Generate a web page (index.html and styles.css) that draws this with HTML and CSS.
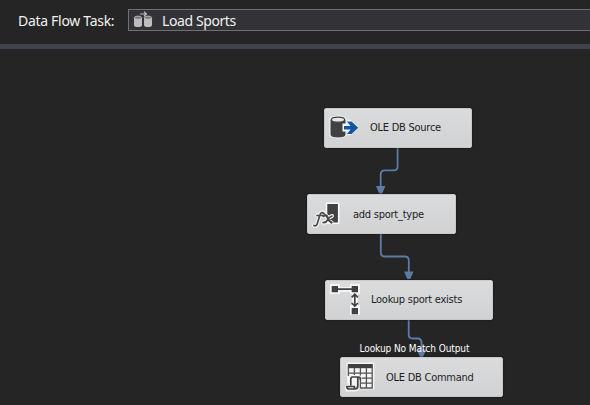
FILE: index.html
```
<!DOCTYPE html>
<html lang="en">
<head>
<meta charset="utf-8">
<title>Data Flow Task</title>
<link rel="stylesheet" href="styles.css">
</head>
<body>
<header class="toolbar">
  <span class="toolbar-label">Data Flow Task:</span>
  <div class="task-picker">
    <svg class="task-icon" width="20" height="17" viewBox="0 0 20 17">
      <g fill="#bdbdbd"><path d="M1 7v7q0 2 4 2t4-2V7zM11 7v7q0 2 4 2t4-2V7z"/></g>
      <g fill="#77777a" stroke="#c8c8c8" stroke-width=".8"><ellipse cx="5" cy="6.7" rx="3.7" ry="1.6"/><ellipse cx="15" cy="6.7" rx="3.7" ry="1.6"/></g>
      <path d="M7 3H13M11 .8 13.400 3 11 5.200" fill="none" stroke="#c0c0c0" stroke-width="1.200"/>
    </svg>
    <span class="task-name">Load Sports</span>
  </div>
</header>
<main class="canvas">
  <svg class="links" width="590" height="356" viewBox="0 49 590 356">
    <g fill="none" stroke="#5d7ba6" stroke-width="1.8">
      <path d="M397.6 148V166.500Q397.600 170.300 393.800 170.300H385Q380.700 170.300 380.700 174.500V188"/>
      <path d="M380.800 234V252.500Q380.800 256.500 384.800 256.500H404.800Q408.800 256.500 408.800 260.500V273"/>
      <path d="M408.700 319.500V334.500Q408.700 338.500 412.700 338.500H417.500Q421.500 338.500 421.500 342.500V352"/>
    </g>
    <path fill="#5d7ba6" d="M376 186h9.400l-3.200 7.500h-3zM404.100 271.500h9.400l-3.200 7.500h-3zM416.800 349.500h9.400l-3.200 7.500h-3z"/>
  </svg>

  <div class="node source">
    <svg class="node-icon" width="36" height="32" viewBox="0 0 36 32">
      <g fill="#f8f8f8" stroke="#f8f8f8" stroke-width="3" stroke-linejoin="round"><path d="M6 7q7-4 14 0v16q-7 4-14 0zM19 14h5V9l8 6.500-8 6.500v-5h-5z"/></g>
      <path fill="#414141" d="M5.500 7.500v15q0 3 7.500 3t7.500-3v-15z"/>
      <ellipse cx="13" cy="7.700" rx="6.600" ry="2.500" fill="#e8e8e8" stroke="#414141" stroke-width="1.200"/>
      <path d="M17.500 11.500h5v8h-5z" fill="#f8f8f8"/>
      <path fill="#0f56a5" d="M19 14h6.500l-3.500-4.500h4.500l6.800 6.200-6.800 6.200H22l3.500-4.500H19z"/>
    </svg>
    <span class="node-label">OLE DB Source</span>
  </div>

  <div class="node derived">
    <svg class="node-icon" width="36" height="32" viewBox="0 0 36 32">
      <path fill="#414141" stroke="#f8f8f8" stroke-width="1.600" d="M18.500 5.300h12.200v20H18.500z"/>
      <g fill="none" stroke-linecap="round" transform="translate(-1.500 -1)">
        <g stroke="#f5f5f5" stroke-width="4"><path d="M17.500 16.500q-3-2.500-4.300 2L11 26q-1 3.800-3.600 2.500M10.500 18.500h6M17 19q3-2 4 1.500t4 5M25.500 19q-3 1-4.500 4t-4.500 2.500"/></g>
        <g stroke="#4a4a4a" stroke-width="1.700"><path d="M17.500 16.500q-3-2.500-4.300 2L11 26q-1 3.800-3.600 2.500M10.500 18.500h6"/><path stroke-width="2.300" d="M17 19q3-2 4 1.500t4 5"/><path d="M25.500 19q-3 1-4.500 4t-4.500 2.500"/></g>
      </g>
    </svg>
    <span class="node-label">add sport_type</span>
  </div>

  <div class="node lookup">
    <svg class="node-icon" width="36" height="38" viewBox="0 0 36 38">
      <g transform="translate(-1 -1)">
        <path fill="#f5f5f5" d="M5 4h10v3h10V4h10v10h-2v11h2v10H25V25h2V14h-2v-2H15v2H5z"/>
        <g fill="#414141"><path d="M6.700 6h6.300v6.300H6.700zM26.700 6h6.300v6.300h-6.300zM26.700 28h6.300v6.300h-6.300zM12 8.300h15v1.700H12z"/></g>
        <path fill="none" stroke="#414141" stroke-width="1.700" d="M29.800 14v12M26.700 17.300l3.100-3 3.100 3M26.700 23l3.100 3 3.100-3"/>
      </g>
    </svg>
    <span class="node-label">Lookup sport exists</span>
  </div>

  <div class="node command">
    <svg class="node-icon" width="36" height="34" viewBox="0 0 36 34">
      <g transform="translate(-1.200 -1)">
        <path fill="#f5f5f5" d="M6.500 3.500h28v27H20l-4 2H5.500v-6l2-1z"/>
        <path fill="#414141" d="M8 5h25v4.200H8z"/>
        <path fill="none" stroke="#555" stroke-width="1.300" d="M8.600 8v9M32.400 8v21H20M8.600 14.200h23.800M18 19.200h14.400M20 24.200h12.400M14.600 9v7M20.600 9v20M26.600 9v20"/>
        <path fill="#f5f5f5" d="M9 16.500h13v4h-3v11H6v-5h5v-6H9z"/>
        <path fill="none" stroke="#414141" stroke-width="1.700" d="M20.500 21v-1.500q0-1.500-2-1.500h-6q-1.500 0-1.500 2.500v6M18 18.500v8.500q0 3-3 3H9.500q-2.500 0-2.500-2.500h7.500q0 2.500 1.500 2.500"/>
      </g>
    </svg>
    <span class="node-label">OLE DB Command</span>
  </div>

  <span class="link-label">Lookup No Match Output</span>
</main>
</body>
</html>
```
FILE: styles.css
```
* { box-sizing: border-box; }

body {
  margin: 0;
  width: 590px;
  height: 405px;
  overflow: hidden;
  background: #252525;
  font-family: "Noto Sans", sans-serif;
  color: #f1f1f1;
}

.toolbar {
  display: flex;
  align-items: flex-start;
  height: 49px;
  padding: 9px 0 0 18px;
  border-bottom: 5px solid #3f4248;
  white-space: nowrap;
}

.toolbar-label {
  width: 110px;
  font-size: 14px;
  line-height: 23px;
  letter-spacing: -0.3px;
}

.task-picker {
  display: flex;
  align-items: center;
  flex: 1;
  height: 22px;
  padding-left: 4px;
  background: #333337;
  border: 1px solid #707070;
  border-right: 0;
}

.task-icon { margin-bottom: 1px; }

.task-name {
  margin-left: 9px;
  font-size: 14px;
  letter-spacing: -0.4px;
}

.canvas {
  position: relative;
  height: 356px;
}

.links {
  position: absolute;
  left: 0;
  top: 0;
}

.node {
  position: absolute;
  display: flex;
  align-items: center;
  height: 40px;
  border: 1px solid #c7c8ca;
  border-radius: 2px;
  background: linear-gradient(#dadbdd, #d1d2d4);
  box-shadow: 0 0 2px #111;
  color: #1e1e1e;
  font-family: "DejaVu Sans Condensed", "DejaVu Sans", sans-serif;
  font-stretch: condensed;
  font-size: 11px;
  white-space: nowrap;
}

.node-icon { flex: none; }
.node-label { margin-left: 9px; letter-spacing: -0.25px; }

.source { left: 324px; top: 58.500px; width: 148px; }
.derived { left: 307px; top: 145px; width: 148.500px; }
.lookup { left: 325px; top: 230.500px; width: 168px; }
.command { left: 340px; top: 308px; width: 163px; }

.link-label {
  position: absolute;
  left: 359.500px;
  top: 293px;
  font-family: "DejaVu Sans Condensed", "DejaVu Sans", sans-serif;
  font-stretch: condensed;
  font-size: 10px;
  line-height: 14px;
  letter-spacing: -0.08px;
  white-space: nowrap;
  color: #fff;
}
```
